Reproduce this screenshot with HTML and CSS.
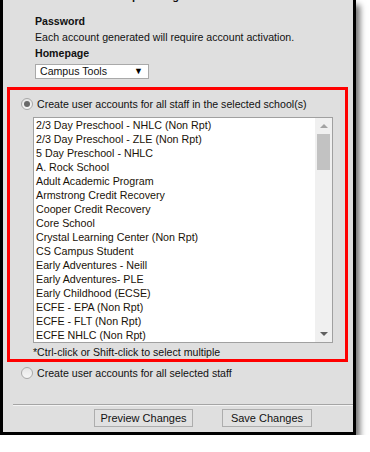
FILE: index.html
```html
<!DOCTYPE html>
<html>
<head>
<meta charset="utf-8">
<link rel="stylesheet" href="styles.css">
</head>
<body>
<div class="panel">
  <div class="fields">
    <div class="cut-title">Account Setup Settings</div>
    <div class="label">Password</div>
    <div class="line">Each account generated will require account activation.</div>
    <div class="label">Homepage</div>
    <div class="select"><span>Campus Tools</span><span class="caret">&#9660;</span></div>
  </div>
  <div class="highlight">
    <div class="radio-row">
      <span class="radio checked"></span>
      <span>Create user accounts for all staff in the selected school(s)</span>
    </div>
    <div class="listbox">
      <ul class="items">
        <li>2/3 Day Preschool - NHLC (Non Rpt)</li>
        <li>2/3 Day Preschool - ZLE (Non Rpt)</li>
        <li>5 Day Preschool - NHLC</li>
        <li>A. Rock School</li>
        <li>Adult Academic Program</li>
        <li>Armstrong Credit Recovery</li>
        <li>Cooper Credit Recovery</li>
        <li>Core School</li>
        <li>Crystal Learning Center (Non Rpt)</li>
        <li>CS Campus Student</li>
        <li>Early Adventures - Neill</li>
        <li>Early Adventures- PLE</li>
        <li>Early Childhood (ECSE)</li>
        <li>ECFE - EPA (Non Rpt)</li>
        <li>ECFE - FLT (Non Rpt)</li>
        <li>ECFE NHLC (Non Rpt)</li>
      </ul>
      <div class="scrollbar">
        <span class="arrow up"></span>
        <span class="thumb"></span>
        <span class="arrow down"></span>
      </div>
    </div>
    <div class="hint">*Ctrl-click or Shift-click to select multiple</div>
  </div>
  <div class="radio-row second">
    <span class="radio"></span>
    <span>Create user accounts for all selected staff</span>
  </div>
  <div class="actions">
    <button class="btn preview">Preview Changes</button>
    <button class="btn save">Save Changes</button>
  </div>
</div>
</body>
</html>
```

FILE: styles.css
```css
* { box-sizing: border-box; }
html, body { margin: 0; padding: 0; background: #fff; }
body {
  font-family: "Liberation Sans", Arial, sans-serif;
  font-size: 10.6px;
  color: #111;
  overflow: hidden;
}
.panel {
  width: 356px;
  height: 435px;
  background: #dfdfdf;
  border-left: 3px solid #000;
  border-right: 3px solid #000;
  border-bottom: 3px solid #000;
  box-shadow: 4px 5px 6px rgba(0,0,0,0.55);
  display: flex;
  flex-direction: column;
}
.fields {
  padding-left: 32px;
}
.cut-title {
  font-weight: bold;
  font-size: 11px;
  line-height: 13px;
  height: 13px;
  margin-top: -10px;
  margin-bottom: 10px;
  padding-left: 26px;
}
.label {
  font-weight: bold;
  line-height: 16px;
  height: 16px;
}
.line {
  line-height: 16px;
  height: 16px;
}
.select {
  margin-top: 3px;
  width: 114px;
  height: 15px;
  background: #fff;
  border: 1px solid #a9a9a9;
  display: flex;
  justify-content: space-between;
  align-items: center;
  padding: 0 5px 0 4px;
  line-height: 13px;
}
.caret { font-size: 9px; color: #000; }
.highlight {
  margin: 8px 5px 0 4px;
  height: 275px;
  border: 3px solid #ff0000;
  padding: 0;
}
.radio-row {
  display: flex;
  align-items: center;
  height: 16px;
  margin-top: 6px;
  padding-left: 11px;
  gap: 4px;
  line-height: 14px;
}
.radio {
  width: 12px;
  height: 12px;
  border-radius: 50%;
  border: 1px solid #a8a8a8;
  background: linear-gradient(#e6e6e6, #f6f6f6);
  display: inline-flex;
  align-items: center;
  justify-content: center;
  flex: none;
}
.radio.checked::after {
  content: "";
  width: 6px;
  height: 6px;
  border-radius: 50%;
  background: #6a6a6a;
}
.listbox {
  margin: 5px 0 0 23px;
  width: 300px;
  height: 226px;
  background: #fff;
  border: 1px solid #a0a0a0;
  display: grid;
  grid-template-columns: 1fr 17px;
}
.items {
  list-style: none;
  margin: 0;
  padding: 0 0 0 2px;
  overflow: hidden;
}
.items li {
  height: 14px;
  line-height: 14px;
  white-space: nowrap;
  color: #1a1208;
  font-size: 10.7px;
}
.scrollbar {
  background: #f0f0f0;
  display: flex;
  flex-direction: column;
  align-items: center;
}
.arrow {
  width: 0;
  height: 0;
  border-left: 4px solid transparent;
  border-right: 4px solid transparent;
}
.arrow.up {
  margin-top: 6px;
  border-bottom: 4px solid #a3a3a3;
}
.arrow.down {
  margin-top: auto;
  margin-bottom: 6px;
  border-top: 4px solid #606060;
}
.thumb {
  margin-top: 6px;
  width: 13px;
  height: 36px;
  background: #c2c2c2;
}
.hint {
  padding-left: 23px;
  margin-top: 3px;
  line-height: 13px;
}
.second {
  margin-top: 3px;
  padding-left: 18px;
}
.actions {
  margin: auto 0 0 10px;
  border-top: 1px solid #a5a5a5;
  box-shadow: inset 0 1px 0 #f4f4f4;
  height: 28px;
  padding: 4px 0 0 81px;
  display: flex;
  gap: 29px;
  align-items: flex-start;
}
.btn {
  font-family: "Liberation Sans", Arial, sans-serif;
  font-size: 11px;
  color: #111;
  background: #e1e1e1;
  border: 1px solid #adadad;
  height: 18px;
  padding: 0;
  line-height: 16px;
}
.preview { width: 99px; }
.save { width: 90px; }
```
